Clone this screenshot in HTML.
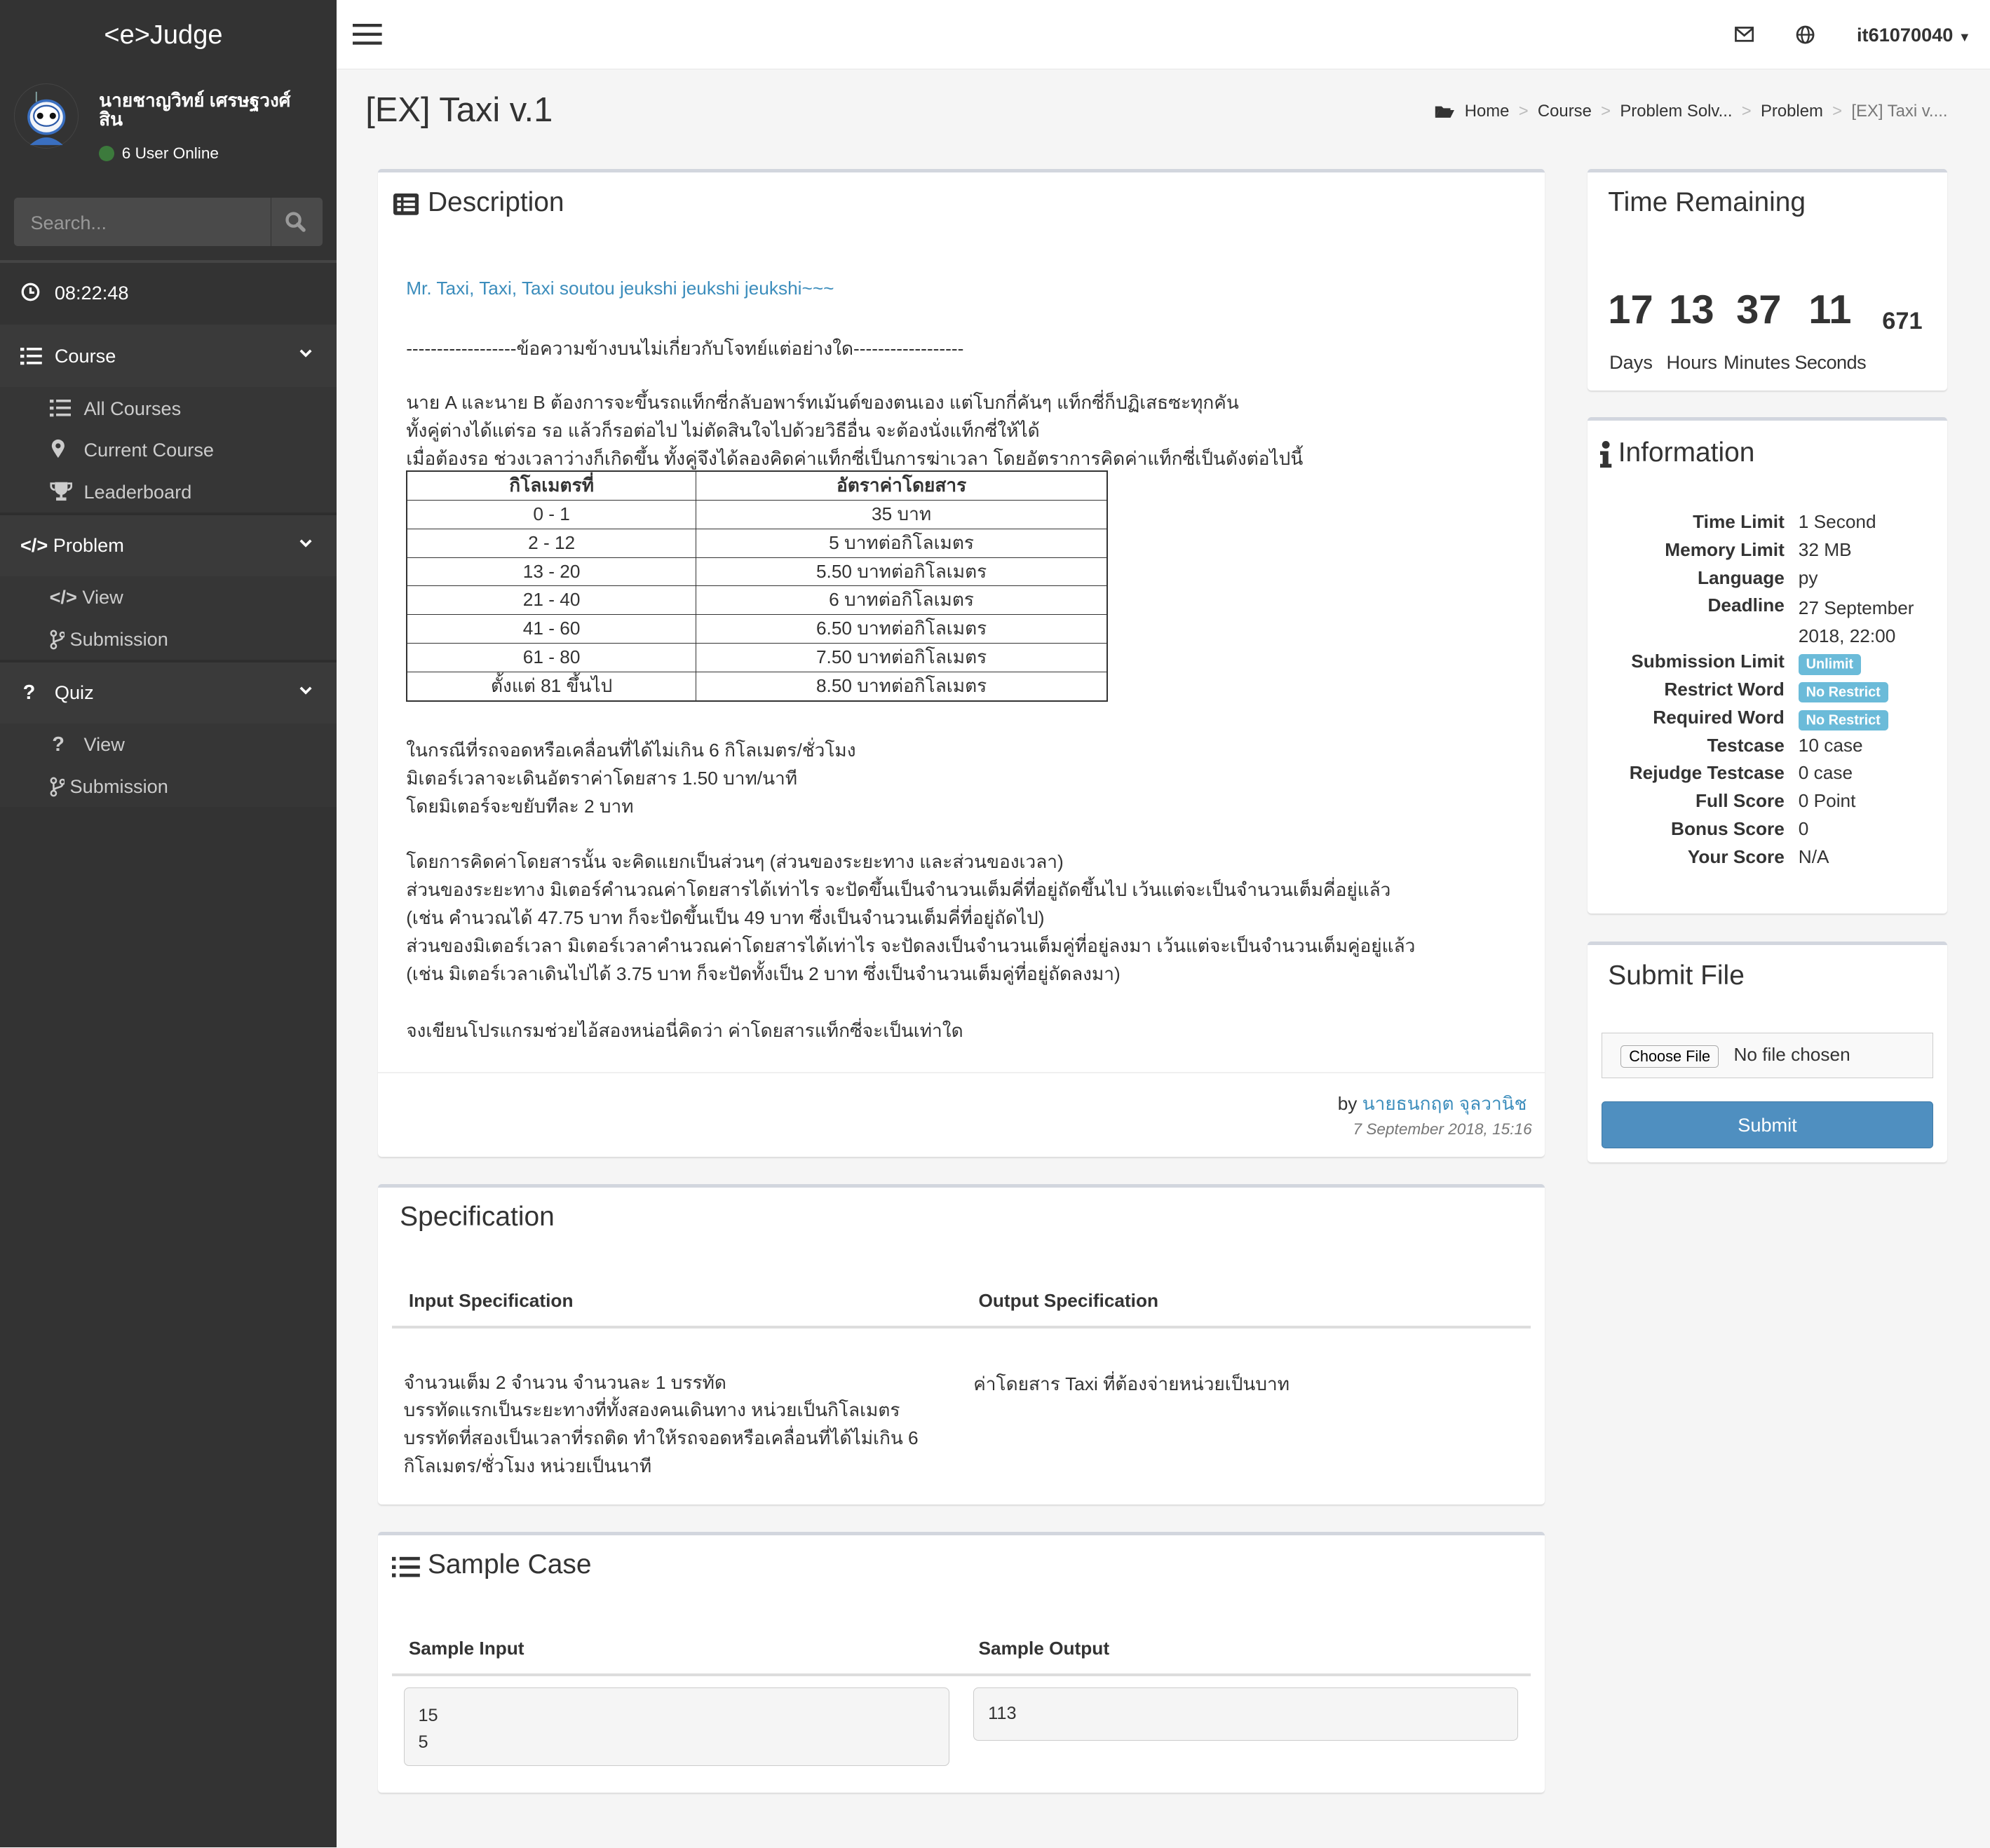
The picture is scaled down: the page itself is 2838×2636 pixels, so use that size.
<!DOCTYPE html>
<html><head><meta charset="utf-8">
<style>
html,body{margin:0;padding:0;}
body{width:1568px;height:1456px;zoom:1.81;background:#f5f5f5;font-family:"Liberation Sans","DejaVu Sans",sans-serif;color:#333;position:relative;overflow:hidden;}
.a{position:absolute;white-space:nowrap;}
#side{position:absolute;left:0;top:0;width:265px;height:1456px;background:#333;}
.sw{color:#fff;}
.box{position:absolute;background:#fff;border-top:3px solid #d2d6de;box-shadow:0 1px 1px rgba(0,0,0,.1);border-radius:3px;}
.t{font-size:14.5px;color:#333;}
table.fare{border-collapse:collapse;font-size:14.5px;}
table.fare td{border:1px solid #333;text-align:center;height:22px;padding:0;line-height:22px;}
.lbl{position:absolute;left:0;width:155px;text-align:right;font-weight:bold;font-size:14.5px;}
.val{position:absolute;left:166px;font-size:14.5px;}
.badge{background:#6bbbd9;color:#fff;font-weight:bold;font-size:11px;padding:2px 6px;border-radius:3px;}
.pre{position:absolute;background:#f5f5f5;border:1px solid #ccc;border-radius:4px;font-family:"Liberation Sans",sans-serif;font-size:14px;}
.chev{position:absolute;left:236px;}
</style></head><body>
<div id="side">
  <div class="a sw" style="left:82px;top:16px;font-size:21px;">&lt;e&gt;Judge</div>
  <div class="a" style="left:11px;top:66px;width:50px;height:50px;border-radius:50%;border:1px solid #444;background:#333;">
    <svg width="50" height="50" viewBox="0 0 50 50"><ellipse cx="25" cy="26" rx="14" ry="13" fill="#f2f4f8" stroke="#3a6fc0" stroke-width="2"/><ellipse cx="25" cy="25" rx="10" ry="8" fill="#fff" stroke="#2c5aa8" stroke-width="1.2"/><circle cx="20" cy="25" r="2.5" fill="#111"/><circle cx="30" cy="25" r="2.5" fill="#111"/><path d="M12 48 Q25 36 38 48Z" fill="#3a6fc0"/><line x1="17" y1="6" x2="17" y2="14" stroke="#8aa" stroke-width="1"/></svg>
  </div>
  <div class="a sw" style="left:78px;top:72px;font-size:14.5px;font-weight:bold;line-height:15px;">นายชาญวิทย์ เศรษฐวงศ์<br>สิน</div>
  <div class="a" style="left:78px;top:115px;width:12px;height:12px;border-radius:50%;background:#3c7a3c;"></div>
  <div class="a sw" style="left:96px;top:114px;font-size:12.5px;">6 User Online</div>
  <div class="a" style="left:11px;top:156px;width:202px;height:38px;background:#4a4a4a;border-radius:3px 0 0 3px;"></div>
  <div class="a" style="left:214px;top:156px;width:40px;height:38px;background:#4a4a4a;border-radius:0 3px 3px 0;"></div>
  <div class="a" style="left:24px;top:167px;font-size:15px;color:#999;">Search...</div>
  <svg class="a" style="left:224px;top:166px" width="18" height="18" viewBox="0 0 18 18"><circle cx="7.5" cy="7.5" r="5" fill="none" stroke="#999" stroke-width="2.4"/><line x1="11" y1="11" x2="15.5" y2="15.5" stroke="#999" stroke-width="3" stroke-linecap="round"/></svg>
  <div class="a" style="left:0;top:205px;width:265px;height:2px;background:#444;"></div>
  <svg class="a" style="left:16px;top:222px" width="16" height="16" viewBox="0 0 16 16"><circle cx="8" cy="8" r="6.2" fill="none" stroke="#fff" stroke-width="1.8"/><path d="M8 4.5V8.5H11" fill="none" stroke="#fff" stroke-width="1.8"/></svg>
  <div class="a sw" style="left:43px;top:222px;font-size:15px;">08:22:48</div>
  <div class="a" style="left:0;top:256px;width:265px;height:380px;background:#3a3a3a;"></div>
  <div class="a" style="left:0;top:305px;width:265px;height:99px;background:#363636;"></div>
  <div class="a" style="left:0;top:404px;width:265px;height:2px;background:#2e2e2e;"></div>
  <div class="a" style="left:0;top:454px;width:265px;height:66px;background:#363636;"></div>
  <div class="a" style="left:0;top:520px;width:265px;height:2px;background:#2e2e2e;"></div>
  <div class="a" style="left:0;top:570px;width:265px;height:66px;background:#363636;"></div>
  <svg class="a" style="left:16px;top:274px" width="17" height="14"><rect x="0" y="0" width="3" height="2.4" fill="#fff"/><rect x="5" y="0" width="12" height="2" fill="#fff"/><rect x="0" y="5.5" width="3" height="2.4" fill="#fff"/><rect x="5" y="5.5" width="12" height="2" fill="#fff"/><rect x="0" y="11" width="3" height="2.4" fill="#fff"/><rect x="5" y="11" width="12" height="2" fill="#fff"/></svg>
  <div class="a sw" style="left:43px;top:272px;font-size:15px;">Course</div>
  <svg class="chev" style="top:275px" width="10" height="7"><path d="M1 1L5 5L9 1" fill="none" stroke="#fff" stroke-width="2"/></svg>
  <svg class="a" style="left:39px;top:315px" width="17" height="14"><rect x="0" y="0" width="3" height="2.4" fill="#ccc"/><rect x="5" y="0" width="12" height="2" fill="#ccc"/><rect x="0" y="5.5" width="3" height="2.4" fill="#ccc"/><rect x="5" y="5.5" width="12" height="2" fill="#ccc"/><rect x="0" y="11" width="3" height="2.4" fill="#ccc"/><rect x="5" y="11" width="12" height="2" fill="#ccc"/></svg>
  <div class="a" style="left:66px;top:313px;font-size:15px;color:#ccc;">All Courses</div>
  <svg class="a" style="left:40px;top:346px" width="12" height="16"><path d="M6 15C2 9 1 7 1 5.5A5 5 0 0 1 11 5.5C11 7 10 9 6 15Z" fill="#ccc"/><circle cx="6" cy="5.5" r="2" fill="#363636"/></svg>
  <div class="a" style="left:66px;top:346px;font-size:15px;color:#ccc;">Current Course</div>
  <svg class="a" style="left:39px;top:379px" width="18" height="16"><path d="M4 1H14V6A5 5 0 0 1 4 6Z" fill="#ccc"/><path d="M4 2H1V4A3 3 0 0 0 4 7M14 2H17V4A3 3 0 0 1 14 7" fill="none" stroke="#ccc" stroke-width="1.5"/><rect x="8" y="10" width="2" height="3" fill="#ccc"/><rect x="5" y="13" width="8" height="2.5" fill="#ccc"/></svg>
  <div class="a" style="left:66px;top:379px;font-size:15px;color:#ccc;">Leaderboard</div>
  <div class="a sw" style="left:16px;top:421px;font-size:15px;"><b>&lt;/&gt;</b> Problem</div>
  <svg class="chev" style="top:425px" width="10" height="7"><path d="M1 1L5 5L9 1" fill="none" stroke="#fff" stroke-width="2"/></svg>
  <div class="a" style="left:39px;top:462px;font-size:15px;color:#ccc;"><b>&lt;/&gt;</b> View</div>
  <svg class="a" style="left:39px;top:496px" width="12" height="16"><circle cx="3" cy="3" r="2" fill="none" stroke="#ccc" stroke-width="1.4"/><circle cx="3" cy="13" r="2" fill="none" stroke="#ccc" stroke-width="1.4"/><circle cx="10" cy="4" r="1.8" fill="none" stroke="#ccc" stroke-width="1.4"/><path d="M3 5V11M10 6C10 9 3 8 3 11" fill="none" stroke="#ccc" stroke-width="1.4"/></svg>
  <div class="a" style="left:55px;top:495px;font-size:15px;color:#ccc;">Submission</div>
  <div class="a sw" style="left:18px;top:537px;font-size:16px;font-weight:bold;">?</div>
  <div class="a sw" style="left:43px;top:537px;font-size:15px;">Quiz</div>
  <svg class="chev" style="top:541px" width="10" height="7"><path d="M1 1L5 5L9 1" fill="none" stroke="#fff" stroke-width="2"/></svg>
  <div class="a" style="left:41px;top:578px;font-size:16px;font-weight:bold;color:#ccc;">?</div>
  <div class="a" style="left:66px;top:578px;font-size:15px;color:#ccc;">View</div>
  <svg class="a" style="left:39px;top:612px" width="12" height="16"><circle cx="3" cy="3" r="2" fill="none" stroke="#ccc" stroke-width="1.4"/><circle cx="3" cy="13" r="2" fill="none" stroke="#ccc" stroke-width="1.4"/><circle cx="10" cy="4" r="1.8" fill="none" stroke="#ccc" stroke-width="1.4"/><path d="M3 5V11M10 6C10 9 3 8 3 11" fill="none" stroke="#ccc" stroke-width="1.4"/></svg>
  <div class="a" style="left:55px;top:611px;font-size:15px;color:#ccc;">Submission</div>
</div>

<div class="a" style="left:265px;top:0;width:1303px;height:54px;background:#fff;border-bottom:1px solid #e6e6e6;"></div>
<svg class="a" style="left:278px;top:19px" width="24" height="18"><rect y="0" width="23" height="2.4" fill="#333"/><rect y="7" width="23" height="2.4" fill="#333"/><rect y="14" width="23" height="2.4" fill="#333"/></svg>
<svg class="a" style="left:1367px;top:21px" width="15" height="12"><rect x="0.8" y="0.8" width="13.4" height="10.4" fill="none" stroke="#333" stroke-width="1.5"/><path d="M1 1.5L7.5 7L14 1.5" fill="none" stroke="#333" stroke-width="1.5"/></svg>
<svg class="a" style="left:1415px;top:20px" width="15" height="15" viewBox="0 0 16 16"><circle cx="8" cy="8" r="6.8" fill="none" stroke="#333" stroke-width="1.6"/><ellipse cx="8" cy="8" rx="3" ry="6.8" fill="none" stroke="#333" stroke-width="1.4"/><line x1="1" y1="8" x2="15" y2="8" stroke="#333" stroke-width="1.4"/></svg>
<div class="a" style="left:1463px;top:19px;font-size:15px;font-weight:bold;">it61070040 <span style="font-size:10px">▼</span></div>

<div class="a" style="left:288px;top:71px;font-size:27px;">[EX] Taxi v.1</div>
<svg class="a" style="left:1130px;top:82px" width="16" height="12"><path d="M1 2H6L7.5 3.5H13V5H4L1 11Z" fill="#333"/><path d="M4 5H16L13 11H1Z" fill="#333"/></svg>
<div class="a" style="left:1154px;top:80px;font-size:13.2px;color:#333;">Home <span style="color:#bbb">&nbsp;&gt;&nbsp;</span> Course <span style="color:#bbb">&nbsp;&gt;&nbsp;</span> Problem Solv... <span style="color:#bbb">&nbsp;&gt;&nbsp;</span> Problem <span style="color:#bbb">&nbsp;&gt;&nbsp;</span> <span style="color:#777">[EX] Taxi v....</span></div>

<!-- Description -->
<div class="box" style="left:298px;top:133px;width:919px;height:776px;">
  <svg class="a" style="left:12px;top:17px" width="20" height="17"><rect x="0" y="0" width="20" height="17" rx="2" fill="#333"/><rect x="3" y="3" width="3" height="2.5" fill="#fff"/><rect x="8" y="3" width="9" height="2.5" fill="#fff"/><rect x="3" y="7.3" width="3" height="2.5" fill="#fff"/><rect x="8" y="7.3" width="9" height="2.5" fill="#fff"/><rect x="3" y="11.5" width="3" height="2.5" fill="#fff"/><rect x="8" y="11.5" width="9" height="2.5" fill="#fff"/></svg>
  <div class="a" style="left:39px;top:12px;font-size:21.5px;">Description</div>
  <div class="a t" style="left:22px;top:83px;color:#3c8dbc;">Mr. Taxi, Taxi, Taxi soutou jeukshi jeukshi jeukshi~~~</div>
  <div class="a t" style="left:22px;top:127px;">------------------ข้อความข้างบนไม่เกี่ยวกับโจทย์แต่อย่างใด------------------</div>
  <div class="a t" style="left:22px;top:171px;line-height:22px;">นาย A และนาย B ต้องการจะขึ้นรถแท็กซี่กลับอพาร์ทเม้นต์ของตนเอง แต่โบกกี่คันๆ แท็กซี่ก็ปฏิเสธซะทุกคัน<br>ทั้งคู่ต่างได้แต่รอ รอ แล้วก็รอต่อไป ไม่ตัดสินใจไปด้วยวิธีอื่น จะต้องนั่งแท็กซี่ให้ได้<br>เมื่อต้องรอ ช่วงเวลาว่างก็เกิดขึ้น ทั้งคู่จึงได้ลองคิดค่าแท็กซี่เป็นการฆ่าเวลา โดยอัตราการคิดค่าแท็กซี่เป็นดังต่อไปนี้</div>
  <table class="fare a" style="left:22px;top:235px;width:553px;border:1.5px solid #333;">
    <tr><td style="width:227px;font-weight:bold">กิโลเมตรที่</td><td style="font-weight:bold">อัตราค่าโดยสาร</td></tr>
    <tr><td>0 - 1</td><td>35 บาท</td></tr>
    <tr><td>2 - 12</td><td>5 บาทต่อกิโลเมตร</td></tr>
    <tr><td>13 - 20</td><td>5.50 บาทต่อกิโลเมตร</td></tr>
    <tr><td>21 - 40</td><td>6 บาทต่อกิโลเมตร</td></tr>
    <tr><td>41 - 60</td><td>6.50 บาทต่อกิโลเมตร</td></tr>
    <tr><td>61 - 80</td><td>7.50 บาทต่อกิโลเมตร</td></tr>
    <tr><td>ตั้งแต่ 81 ขึ้นไป</td><td>8.50 บาทต่อกิโลเมตร</td></tr>
  </table>
  <div class="a t" style="left:22px;top:445px;line-height:22px;">ในกรณีที่รถจอดหรือเคลื่อนที่ได้ไม่เกิน 6 กิโลเมตร/ชั่วโมง<br>มิเตอร์เวลาจะเดินอัตราค่าโดยสาร 1.50 บาท/นาที<br>โดยมิเตอร์จะขยับทีละ 2 บาท</div>
  <div class="a t" style="left:22px;top:533px;line-height:22px;">โดยการคิดค่าโดยสารนั้น จะคิดแยกเป็นส่วนๆ (ส่วนของระยะทาง และส่วนของเวลา)<br>ส่วนของระยะทาง มิเตอร์คำนวณค่าโดยสารได้เท่าไร จะปัดขึ้นเป็นจำนวนเต็มคี่ที่อยู่ถัดขึ้นไป เว้นแต่จะเป็นจำนวนเต็มคี่อยู่แล้ว<br>(เช่น คำนวณได้ 47.75 บาท ก็จะปัดขึ้นเป็น 49 บาท ซึ่งเป็นจำนวนเต็มคี่ที่อยู่ถัดไป)<br>ส่วนของมิเตอร์เวลา มิเตอร์เวลาคำนวณค่าโดยสารได้เท่าไร จะปัดลงเป็นจำนวนเต็มคู่ที่อยู่ลงมา เว้นแต่จะเป็นจำนวนเต็มคู่อยู่แล้ว<br>(เช่น มิเตอร์เวลาเดินไปได้ 3.75 บาท ก็จะปัดทั้งเป็น 2 บาท ซึ่งเป็นจำนวนเต็มคู่ที่อยู่ถัดลงมา)</div>
  <div class="a t" style="left:22px;top:665px;">จงเขียนโปรแกรมช่วยไอ้สองหน่อนี่คิดว่า ค่าโดยสารแท็กซี่จะเป็นเท่าใด</div>
  <div class="a" style="left:0;top:709px;width:919px;height:1px;background:#f0f0f0;"></div>
  <div class="a t" style="right:14px;top:722px;">by <span style="color:#3c8dbc">นายธนกฤต จุลวานิช</span></div>
  <div class="a" style="right:10px;top:747px;font-size:12.5px;color:#777;font-style:italic;">7 September 2018, 15:16</div>
</div>

<!-- Specification -->
<div class="box" style="left:298px;top:933px;width:919px;height:250px;">
  <div class="a" style="left:17px;top:11px;font-size:21.5px;">Specification</div>
  <div class="a" style="left:24px;top:81px;font-size:14.5px;font-weight:bold;">Input Specification</div>
  <div class="a" style="left:473px;top:81px;font-size:14.5px;font-weight:bold;">Output Specification</div>
  <div class="a" style="left:11px;top:109px;width:897px;height:2px;background:#ddd;"></div>
  <div class="a t" style="left:20px;top:143px;line-height:22px;">จำนวนเต็ม 2 จำนวน จำนวนละ 1 บรรทัด<br>บรรทัดแรกเป็นระยะทางที่ทั้งสองคนเดินทาง หน่วยเป็นกิโลเมตร<br>บรรทัดที่สองเป็นเวลาที่รถติด ทำให้รถจอดหรือเคลื่อนที่ได้ไม่เกิน 6<br>กิโลเมตร/ชั่วโมง หน่วยเป็นนาที</div>
  <div class="a t" style="left:469px;top:143px;">ค่าโดยสาร Taxi ที่ต้องจ่ายหน่วยเป็นบาท</div>
</div>

<!-- Sample -->
<div class="box" style="left:298px;top:1207px;width:919px;height:203px;">
  <svg class="a" style="left:11px;top:16px" width="22" height="18"><rect x="0" y="1" width="3" height="3" fill="#333"/><rect x="0" y="7.5" width="3" height="3" fill="#333"/><rect x="0" y="14" width="3" height="3" fill="#333"/><rect x="6" y="1" width="16" height="2.6" fill="#333"/><rect x="6" y="7.7" width="16" height="2.6" fill="#333"/><rect x="6" y="14.2" width="16" height="2.6" fill="#333"/></svg>
  <div class="a" style="left:39px;top:11px;font-size:21.5px;">Sample Case</div>
  <div class="a" style="left:24px;top:81px;font-size:14.5px;font-weight:bold;">Sample Input</div>
  <div class="a" style="left:473px;top:81px;font-size:14.5px;font-weight:bold;">Sample Output</div>
  <div class="a" style="left:11px;top:109px;width:897px;height:2px;background:#ddd;"></div>
  <div class="pre" style="left:20px;top:120px;width:429px;height:61px;"><div style="padding:11px 0 0 11px;line-height:21px;">15<br>5</div></div>
  <div class="pre" style="left:469px;top:120px;width:428px;height:41px;"><div style="padding:12px 0 0 11px;">113</div></div>
</div>

<!-- Time Remaining -->
<div class="box" style="left:1251px;top:133px;width:283px;height:172px;">
  <div class="a" style="left:16px;top:12px;font-size:21.5px;">Time Remaining</div>
  <div class="a" style="left:16px;top:90px;font-size:32px;font-weight:bold;">17</div>
  <div class="a" style="left:64px;top:90px;font-size:32px;font-weight:bold;">13</div>
  <div class="a" style="left:117px;top:90px;font-size:32px;font-weight:bold;">37</div>
  <div class="a" style="left:174px;top:90px;font-size:32px;font-weight:bold;">11</div>
  <div class="a" style="left:232px;top:107px;font-size:19px;font-weight:bold;">671</div>
  <div class="a" style="left:17px;top:141px;font-size:15px;">Days</div>
  <div class="a" style="left:62px;top:141px;font-size:15px;">Hours</div>
  <div class="a" style="left:107px;top:141px;font-size:15px;">Minutes</div>
  <div class="a" style="left:163px;top:141px;font-size:15px;letter-spacing:-0.3px;">Seconds</div>
</div>

<!-- Information -->
<div class="box" style="left:1251px;top:329px;width:283px;height:388px;">
  <svg class="a" style="left:10px;top:16px" width="9" height="21"><circle cx="4.5" cy="3" r="3" fill="#333"/><path d="M0 8H6.5V18H9V21H0V18H2V11H0Z" fill="#333"/></svg>
  <div class="a" style="left:24px;top:13px;font-size:21.5px;">Information</div>
  <div class="a" style="left:0;top:71px;width:283px;">
    <div class="lbl" style="top:0">Time Limit</div><div class="val" style="top:0">1 Second</div>
    <div class="lbl" style="top:22px">Memory Limit</div><div class="val" style="top:22px">32 MB</div>
    <div class="lbl" style="top:44px">Language</div><div class="val" style="top:44px">py</div>
    <div class="lbl" style="top:66px">Deadline</div><div class="val" style="top:66px;line-height:22px;">27 September<br>2018, 22:00</div>
    <div class="lbl" style="top:110px">Submission Limit</div><div class="val" style="top:111px"><span class="badge">Unlimit</span></div>
    <div class="lbl" style="top:132px">Restrict Word</div><div class="val" style="top:133px"><span class="badge">No Restrict</span></div>
    <div class="lbl" style="top:154px">Required Word</div><div class="val" style="top:155px"><span class="badge">No Restrict</span></div>
    <div class="lbl" style="top:176px">Testcase</div><div class="val" style="top:176px">10 case</div>
    <div class="lbl" style="top:198px">Rejudge Testcase</div><div class="val" style="top:198px">0 case</div>
    <div class="lbl" style="top:220px">Full Score</div><div class="val" style="top:220px">0 Point</div>
    <div class="lbl" style="top:242px">Bonus Score</div><div class="val" style="top:242px">0</div>
    <div class="lbl" style="top:264px">Your Score</div><div class="val" style="top:264px">N/A</div>
  </div>
</div>

<!-- Submit File -->
<div class="box" style="left:1251px;top:742px;width:283px;height:171px;">
  <div class="a" style="left:16px;top:12px;font-size:21.5px;">Submit File</div>
  <div class="a" style="left:11px;top:69px;width:260px;height:35px;border:1px solid #ccc;background:#f9f9f9;"></div>
  <div class="a" style="left:26px;top:79px;padding:1px 6px;border:1px solid #aaa;border-radius:3px;background:#fafafa;font-size:12px;color:#000;">Choose File</div>
  <div class="a" style="left:115px;top:78px;font-size:14.5px;">No file chosen</div>
  <div class="a" style="left:11px;top:123px;width:260px;height:36px;background:#4f8fc0;border:1px solid #3e7aa8;border-radius:3px;color:#fff;font-size:15px;text-align:center;line-height:36px;">Submit</div>
</div>
</body></html>
